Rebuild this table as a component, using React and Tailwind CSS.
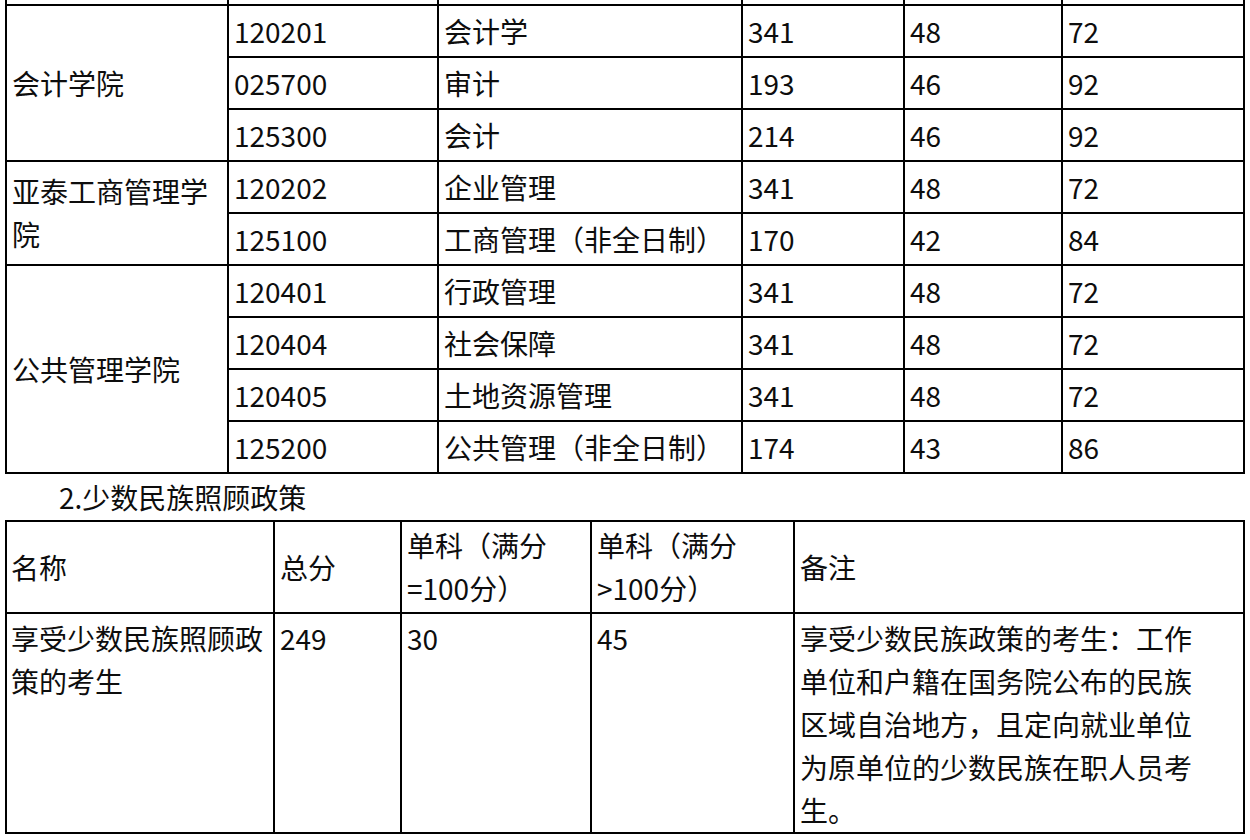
const majors = [
  { college: '会计学院', span: 3, code: '120201', major: '会计学', total: '341', single1: '48', single2: '72' },
  { code: '025700', major: '审计', total: '193', single1: '46', single2: '92' },
  { code: '125300', major: '会计', total: '214', single1: '46', single2: '92' },
  { college: '亚泰工商管理学院', span: 2, code: '120202', major: '企业管理', total: '341', single1: '48', single2: '72' },
  { code: '125100', major: '工商管理（非全日制）', total: '170', single1: '42', single2: '84' },
  { college: '公共管理学院', span: 4, code: '120401', major: '行政管理', total: '341', single1: '48', single2: '72' },
  { code: '120404', major: '社会保障', total: '341', single1: '48', single2: '72' },
  { code: '120405', major: '土地资源管理', total: '341', single1: '48', single2: '72' },
  { code: '125200', major: '公共管理（非全日制）', total: '174', single1: '43', single2: '86' },
];

const cell = 'border-2 border-black pl-[5px] pr-[4px] h-[52px] py-0 align-middle text-left font-normal';

export default function App() {
  return (
    <div className="min-h-[840px] w-[1250px] bg-white text-[#0d0d0d] text-[28px] leading-[43px] font-['Noto_Sans_CJK_SC','Noto_Sans',sans-serif] pl-[5px] overflow-hidden">
      <table className="table-fixed border-collapse w-[1238px]">
        <colgroup>
          <col className="w-[222px]" />
          <col className="w-[210px]" />
          <col className="w-[304px]" />
          <col className="w-[162px]" />
          <col className="w-[158px]" />
          <col className="w-[182px]" />
        </colgroup>
        <tbody>
          {/* 上一页剩下的行 */}
          <tr>
            {[0, 1, 2, 3, 4, 5].map((i) => (
              <td key={i} className="border-2 border-t-0 border-black h-[5px] p-0" />
            ))}
          </tr>
          {majors.map((m) => (
            <tr key={m.code}>
              {m.college && (
                <td rowSpan={m.span} className={cell}>
                  {m.college}
                </td>
              )}
              <td className={cell}>{m.code}</td>
              <td className={cell}>{m.major}</td>
              <td className={cell}>{m.total}</td>
              <td className={cell}>{m.single1}</td>
              <td className={cell}>{m.single2}</td>
            </tr>
          ))}
        </tbody>
      </table>

      <div className="h-[46px] leading-[46px] pl-[54px]">2.少数民族照顾政策</div>

      <table className="table-fixed border-collapse w-[1238px]">
        <colgroup>
          <col className="w-[268px]" />
          <col className="w-[127px]" />
          <col className="w-[190px]" />
          <col className="w-[203px]" />
          <col className="w-[450px]" />
        </colgroup>
        <thead>
          <tr>
            <th className="border-2 border-black pl-[4px] pr-[3px] h-[92px] align-middle text-left font-normal">名称</th>
            <th className="border-2 border-black pl-[5px] pr-[4px] align-middle text-left font-normal">总分</th>
            <th className="border-2 border-black pl-[5px] pr-[4px] align-middle text-left font-normal">单科（满分=100分）</th>
            <th className="border-2 border-black pl-[5px] pr-[4px] align-middle text-left font-normal">单科（满分&gt;100分）</th>
            <th className="border-2 border-black pl-[5px] pr-[30px] align-middle text-left font-normal">备注</th>
          </tr>
        </thead>
        <tbody>
          <tr>
            <td className="border-2 border-black pl-[4px] pr-[3px] pt-[3px] pb-0 h-[218px] align-top">享受少数民族照顾政策的考生</td>
            <td className="border-2 border-black pl-[5px] pr-[4px] pt-[3px] align-top">249</td>
            <td className="border-2 border-black pl-[5px] pr-[4px] pt-[3px] align-top">30</td>
            <td className="border-2 border-black pl-[5px] pr-[4px] pt-[3px] align-top">45</td>
            <td className="border-2 border-black pl-[5px] pr-[30px] pt-[3px] align-top">
              享受少数民族政策的考生：工作单位和户籍在国务院公布的民族区域自治地方，且定向就业单位为原单位的少数民族在职人员考生。
            </td>
          </tr>
        </tbody>
      </table>
    </div>
  );
}
